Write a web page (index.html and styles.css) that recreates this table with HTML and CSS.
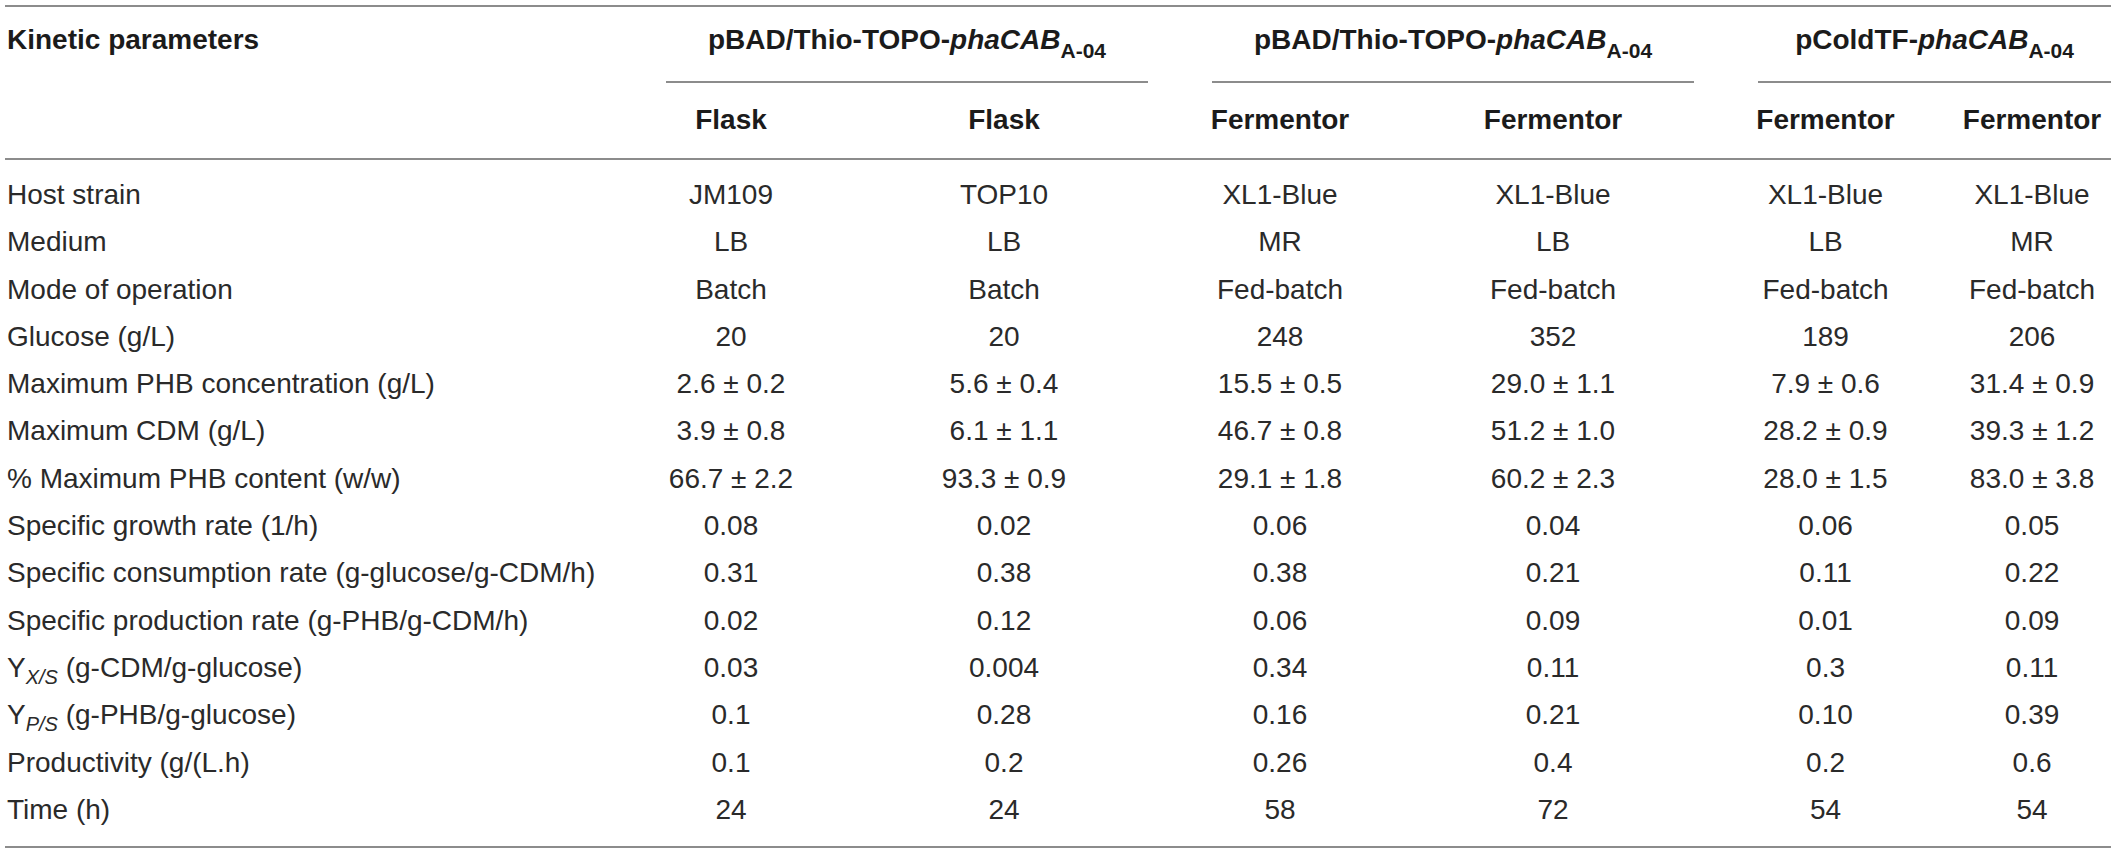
FILE: index.html
```html
<!DOCTYPE html>
<html>
  <head>
    <meta charset="UTF-8">
    <title>Kinetic parameters</title>
    <link rel="stylesheet" href="styles.css">
  </head>
  <body>
    <table class="kinetics">
      <colgroup>
        <col class="col-label">
        <col class="col-a">
        <col class="col-b">
        <col class="col-c">
        <col class="col-d">
        <col class="col-e">
        <col class="col-f">
      </colgroup>
      <thead>
        <tr class="groups">
          <th class="label" rowspan="2">Kinetic parameters</th>
          <th class="group" colspan="2"><span>pBAD/Thio-TOPO-<i>phaCAB</i><sub>A-04</sub></span></th>
          <th class="group" colspan="2"><span>pBAD/Thio-TOPO-<i>phaCAB</i><sub>A-04</sub></span></th>
          <th class="group last" colspan="2"><span>pColdTF-<i>phaCAB</i><sub>A-04</sub></span></th>
        </tr>
        <tr class="modes">
          <th>Flask</th>
          <th>Flask</th>
          <th>Fermentor</th>
          <th>Fermentor</th>
          <th class="e">Fermentor</th>
          <th class="f">Fermentor</th>
        </tr>
      </thead>
      <tbody>
        <tr>
          <td>Host strain</td>
          <td>JM109</td><td>TOP10</td><td>XL1-Blue</td><td>XL1-Blue</td><td class="e">XL1-Blue</td><td class="f">XL1-Blue</td>
        </tr>
        <tr>
          <td>Medium</td>
          <td>LB</td><td>LB</td><td>MR</td><td>LB</td><td class="e">LB</td><td class="f">MR</td>
        </tr>
        <tr>
          <td>Mode of operation</td>
          <td>Batch</td><td>Batch</td><td>Fed-batch</td><td>Fed-batch</td><td class="e">Fed-batch</td><td class="f">Fed-batch</td>
        </tr>
        <tr>
          <td>Glucose (g/L)</td>
          <td>20</td><td>20</td><td>248</td><td>352</td><td class="e">189</td><td class="f">206</td>
        </tr>
        <tr>
          <td>Maximum PHB concentration (g/L)</td>
          <td>2.6 ± 0.2</td><td>5.6 ± 0.4</td><td>15.5 ± 0.5</td><td>29.0 ± 1.1</td><td class="e">7.9 ± 0.6</td><td class="f">31.4 ± 0.9</td>
        </tr>
        <tr>
          <td>Maximum CDM (g/L)</td>
          <td>3.9 ± 0.8</td><td>6.1 ± 1.1</td><td>46.7 ± 0.8</td><td>51.2 ± 1.0</td><td class="e">28.2 ± 0.9</td><td class="f">39.3 ± 1.2</td>
        </tr>
        <tr>
          <td>% Maximum PHB content (w/w)</td>
          <td>66.7 ± 2.2</td><td>93.3 ± 0.9</td><td>29.1 ± 1.8</td><td>60.2 ± 2.3</td><td class="e">28.0 ± 1.5</td><td class="f">83.0 ± 3.8</td>
        </tr>
        <tr>
          <td>Specific growth rate (1/h)</td>
          <td>0.08</td><td>0.02</td><td>0.06</td><td>0.04</td><td class="e">0.06</td><td class="f">0.05</td>
        </tr>
        <tr>
          <td>Specific consumption rate (g-glucose/g-CDM/h)</td>
          <td>0.31</td><td>0.38</td><td>0.38</td><td>0.21</td><td class="e">0.11</td><td class="f">0.22</td>
        </tr>
        <tr>
          <td>Specific production rate (g-PHB/g-CDM/h)</td>
          <td>0.02</td><td>0.12</td><td>0.06</td><td>0.09</td><td class="e">0.01</td><td class="f">0.09</td>
        </tr>
        <tr>
          <td>Y<sub><i>X/S</i></sub> (g-CDM/g-glucose)</td>
          <td>0.03</td><td>0.004</td><td>0.34</td><td>0.11</td><td class="e">0.3</td><td class="f">0.11</td>
        </tr>
        <tr>
          <td>Y<sub><i>P/S</i></sub> (g-PHB/g-glucose)</td>
          <td>0.1</td><td>0.28</td><td>0.16</td><td>0.21</td><td class="e">0.10</td><td class="f">0.39</td>
        </tr>
        <tr>
          <td>Productivity (g/(L.h)</td>
          <td>0.1</td><td>0.2</td><td>0.26</td><td>0.4</td><td class="e">0.2</td><td class="f">0.6</td>
        </tr>
        <tr>
          <td>Time (h)</td>
          <td>24</td><td>24</td><td>58</td><td>72</td><td class="e">54</td><td class="f">54</td>
        </tr>
      </tbody>
    </table>
  </body>
</html>
```

FILE: styles.css
```css
body {
  margin: 0;
  padding: 5px;
  background-color: #fff;
  color: #2a2a2a;
  font-family: "Liberation Sans", Arial, sans-serif;
}

.kinetics {
  border-collapse: separate;
  border-spacing: 0;
  table-layout: fixed;
  width: 2106px;
  font-size: 28px;
  line-height: 47.3px;
}

.col-label { width: 629px; }
.col-a { width: 194px; }
.col-b { width: 352px; }
.col-c { width: 200px; }
.col-d { width: 346px; }
.col-e { width: 195px; }
.col-f { width: 190px; }

th,
td {
  padding: 0;
  text-align: center;
  white-space: nowrap;
}

th {
  font-weight: bold;
  color: #1b1b1b;
  line-height: 47px;
}

td:first-child,
th.label {
  text-align: left;
  padding-left: 2px;
}

.kinetics .e {
  padding-left: 4px;
}

.kinetics .f {
  padding-left: 32px;
}

/* header rows */
.groups th {
  border-top: 2px solid #8c8c8c;
  padding-top: 9px;
}

th.label {
  vertical-align: top;
  border-bottom: 2px solid #8c8c8c;
}

th.group {
  padding-left: 32px;
  padding-right: 32px;
}

th.group.last {
  padding-right: 0;
}

th.group span {
  display: block;
  padding-bottom: 18px;
  border-bottom: 2px solid #8c8c8c;
}

.modes th {
  padding-top: 13px;
  padding-bottom: 15px;
  border-bottom: 2px solid #8c8c8c;
}

.modes th.f {
  padding-left: 32px;
}

/* body rows */
tbody tr:first-child td {
  padding-top: 11px;
}

tbody tr:last-child td {
  padding-bottom: 13px;
  border-bottom: 2px solid #8c8c8c;
}

sub {
  font-size: 20px;
  line-height: 0;
  vertical-align: -7px;
}

th sub {
  font-size: 21px;
  vertical-align: -9px;
}

sub i {
  font-style: italic;
}
```
